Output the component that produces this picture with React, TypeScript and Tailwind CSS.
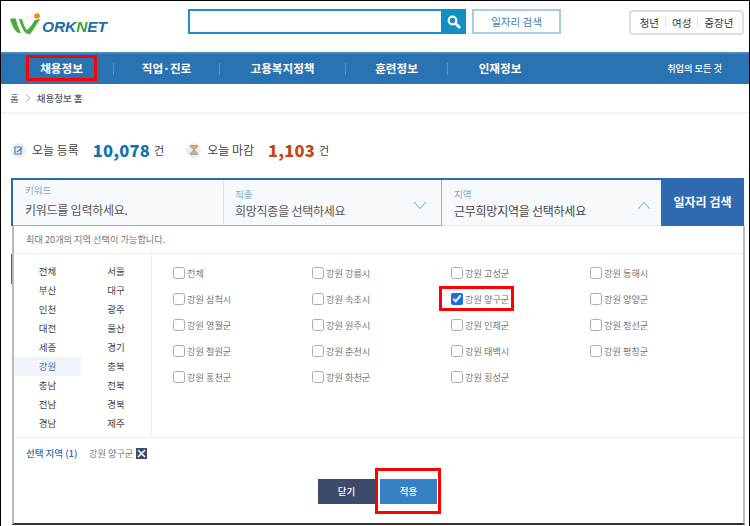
const font = { fontFamily: '"Noto Sans CJK KR", "Noto Sans", sans-serif' };

const navItems = ["채용정보", "직업·진로", "고용복지정책", "훈련정보", "인재정보"];
const navWidths = ["w-[113px] pl-[9px]", "w-[106px]", "w-[126px]", "w-[102px]", "w-[104px]"];

const sidos = [
  "전체", "서울", "부산", "대구", "인천", "광주", "대전", "울산", "세종",
  "경기", "강원", "충북", "충남", "전북", "전남", "경북", "경남", "제주",
];

const regions = [
  "전체", "강원 강릉시", "강원 고성군", "강원 동해시",
  "강원 삼척시", "강원 속초시", "강원 양구군", "강원 양양군",
  "강원 영월군", "강원 원주시", "강원 인제군", "강원 정선군",
  "강원 철원군", "강원 춘천시", "강원 태백시", "강원 평창군",
  "강원 홍천군", "강원 화천군", "강원 횡성군",
];

function Logo() {
  return (
    <div className="flex items-end h-[24px] ml-[9px]">
      <svg width="32" height="24" viewBox="0 0 32 24" className="shrink-0">
        <circle cx="27" cy="4" r="2.8" fill="#ee8a1d" />
        <path d="M0 7 C3 6 5 6 6 7 C7 12 9 17 11 21 C6 22 3 16 0 7Z" fill="#49ac3f" />
        <path d="M9 7 L12 7 C13 11 15 16 17 18 C20 16 23 11 25 8 L31 7 C27 10 24 18 20 22 C14 23 11 14 9 7Z" fill="#49ac3f" />
      </svg>
      <span className="text-[15.5px] leading-[19px] font-bold italic text-[#1d6da8] tracking-[-0.1px]" style={{ fontFamily: '"Liberation Sans", sans-serif' }}>
        ORK<span className="text-[#3fa535]">N</span>ET
      </span>
    </div>
  );
}

function Header() {
  return (
    <div className="flex items-start h-[51px] pt-[8px]">
      <div className="w-[187px] shrink-0 pt-[3px]">
        <Logo />
      </div>
      <div className="flex shrink-0 w-[278px] h-[25px] border-2 border-[#1b8fc7]">
        <div className="flex-1" />
        <div className="w-[25px] -my-[2px] -mr-[2px] h-[25px] bg-[#0f8fc4] flex items-center justify-center">
          <svg width="14" height="14" viewBox="0 0 14 14" fill="none" stroke="white" strokeWidth="2.2">
            <circle cx="5.5" cy="5.5" r="3.8" />
            <path d="M8.5 8.5 L13 13" strokeWidth="2.8" />
          </svg>
        </div>
      </div>
      <div className="ml-[6px] shrink-0 w-[89px] h-[25px] border-2 border-[#a5cbe6] flex items-center justify-center text-[10.5px] text-[#3b7fb0]">
        일자리 검색
      </div>
      <div className="ml-[68px] shrink-0 w-[115px] h-[25px] mt-[1px] border-2 border-[#dddddd] rounded-[4px] flex items-center justify-center text-[10.5px] text-[#333333]">
        <span>청년</span>
        <span className="w-px h-[9px] bg-[#dddddd] mx-[6px]" />
        <span>여성</span>
        <span className="w-px h-[9px] bg-[#dddddd] mx-[6px]" />
        <span>중장년</span>
      </div>
    </div>
  );
}

function Nav() {
  return (
    <div className="flex items-center h-[32px] bg-[#2a73b3] border-t-2 border-[#4a87bd] text-white">
      {navItems.map((item, i) => (
        <div key={item} className={`flex shrink-0 items-center justify-center h-[12px] text-[11.6px] font-bold whitespace-nowrap ${navWidths[i]} ${i < 4 ? "border-r border-[#5b94c6]" : ""}`}>
          {item}
        </div>
      ))}
      <div className="ml-auto pr-[27px] text-[9.2px] font-medium whitespace-nowrap">취업의 모든 것</div>
    </div>
  );
}

function Stat({ label, value, color, icon }: { label: string; value: string; color: string; icon: React.ReactNode }) {
  return (
    <div className="flex items-center">
      <span className="w-[15px] h-[15px] rounded-full bg-[#e9eef3] flex items-center justify-center">{icon}</span>
      <span className="ml-[6px] text-[12px] text-[#444444]">{label}</span>
      <span className={`ml-[14px] text-[16.5px] font-extrabold leading-none tracking-[0.2px] ${color}`}>{value}</span>
      <span className="ml-[4px] text-[11px] text-[#444444]">건</span>
    </div>
  );
}

function Chevron({ up }: { up?: boolean }) {
  return (
    <svg width="14" height="9" viewBox="0 0 14 9" fill="none" stroke="#8fb0cf" strokeWidth="1.1" className="shrink-0">
      <path d={up ? "M1 8 L7 1.5 L13 8" : "M1 1 L7 7.5 L13 1"} />
    </svg>
  );
}

function SearchBar() {
  return (
    <div className="flex h-[48px] ml-[10px] w-[733px] border-t-2 border-l-2 border-[#2f69b0] bg-[#f7fafd]">
      <div className="w-[211px] shrink-0 border-r border-b border-[#d8e2ea] border-b-[#aaaaaa] pl-[12px] pt-[3px]">
        <div className="text-[9.5px] leading-[14px] text-[#7aa6cc]">키워드</div>
        <div className="mt-[3px] text-[12px] tracking-[-0.25px] leading-[20px] text-[#555555]">키워드를 입력하세요.</div>
      </div>
      <div className="w-[218px] shrink-0 border-r border-b border-[#aaaaaa] pl-[11px] pr-[14px] pt-[5px] flex items-end justify-between pb-[8px]">
        <div>
          <div className="text-[9.5px] leading-[14px] text-[#7aa6cc]">직종</div>
          <div className="text-[12px] tracking-[-0.25px] leading-[20px] text-[#555555] -mb-[4px]">희망직종을 선택하세요</div>
        </div>
        <div className="mb-[7px]"><Chevron /></div>
      </div>
      <div className="w-[219px] shrink-0 border-b border-[#e3e9ef] pl-[12px] pr-[10px] pt-[5px] flex items-end justify-between pb-[8px]">
        <div>
          <div className="text-[9.5px] leading-[14px] text-[#7aa6cc]">지역</div>
          <div className="text-[12px] tracking-[-0.25px] leading-[20px] text-[#444444] -mb-[4px]">근무희망지역을 선택하세요</div>
        </div>
        <div className="mb-[7px]"><Chevron up /></div>
      </div>
      <div className="w-[83px] shrink-0 -mt-[2px] bg-[#2f69b0] text-white text-[12px] font-bold flex items-center justify-center">
        일자리 검색
      </div>
    </div>
  );
}

function RegionPanel() {
  return (
    <div className="relative ml-[11px] w-[733px] h-[299px] border-l-2 border-r-2 border-b-2 border-[#bbbbbb] border-b-[#333333] bg-white">
      <div className="absolute -left-[3px] top-[28px] w-px h-[30px] bg-[#2f69b0]" />
      <div className="h-[28px] border-b border-[#ededed] pl-[12px] flex items-center text-[9.2px] text-[#777777]">
        최대 20개의 지역 선택이 가능합니다.
      </div>
      <div className="flex h-[184px] border-b border-[#ededed]">
        <div className="w-[138px] shrink-0 border-r border-[#ededed] grid grid-cols-[67px_70px] content-start pt-[8px]">
          {sidos.map((s) => (
            <div key={s} className={`h-[19px] flex items-center justify-center text-[9.5px] ${s === "강원" ? "bg-[#f1f5f9] text-[#2f6fae]" : "text-[#444444]"}`}>
              {s}
            </div>
          ))}
        </div>
        <div className="flex-1 grid grid-cols-[repeat(4,139px)] content-start pl-[21px] pt-[11px]">
          {regions.map((r) => (
            <label key={r} className="h-[26px] flex items-start gap-[2px] text-[9.2px] leading-[17px] text-[#777777]">
              <input type="checkbox" readOnly checked={r === "강원 양구군"} className="w-[12px] h-[12px] m-0 mt-[2px] accent-[#1a6fe0] opacity-60 checked:opacity-100" />
              <span>{r}</span>
            </label>
          ))}
        </div>
      </div>
      <div className="flex items-center h-[31px] pl-[12px] text-[9.5px]">
        <span className="font-medium text-[#2a6ea8] w-[63px]">선택 지역 (1)</span>
        <span className="text-[9.2px] text-[#777777]">강원 양구군</span>
        <span className="ml-[3px] w-[11px] h-[11px] bg-[#3d4a6b] flex items-center justify-center">
          <svg width="9" height="9" viewBox="0 0 9 9" stroke="white" strokeWidth="1.5"><path d="M1 1 L8 8 M8 1 L1 8" /></svg>
        </span>
      </div>
      <div className="flex justify-center gap-[5px] pt-[10px] pr-[2px]">
        <div className="w-[57px] h-[25px] bg-[#3d4a6b] text-white text-[9.5px] font-medium flex items-center justify-center">닫기</div>
        <div className="w-[57px] h-[25px] bg-[#3680c4] text-white text-[9.5px] font-medium flex items-center justify-center">적용</div>
      </div>
    </div>
  );
}

export default function App() {
  return (
    <div className="relative w-[750px] h-[526px] bg-white overflow-hidden border-t border-l border-r border-black" style={font}>
      <Header />
      <Nav />
      <div className="h-[30px] border-b-2 border-[#f3f3f3] pl-[9px] flex items-center text-[9.5px] text-[#555555]">
        <span>홈</span>
        <svg width="6" height="8" viewBox="0 0 6 8" fill="none" stroke="#aaaaaa" className="mx-[6px]"><path d="M1 0.5 L5 4 L1 7.5" /></svg>
        <span className="font-medium">채용정보 홈</span>
      </div>
      <div className="flex items-center gap-[22px] h-[64px] pl-[10px] pt-[8px]">
        <Stat
          label="오늘 등록"
          value="10,078"
          color="text-[#1273ac]"
          icon={<svg width="9" height="9" viewBox="0 0 9 9" fill="none" stroke="#4b7fae" strokeWidth="1.2"><path d="M1 1 H7 V8 H1Z" /><path d="M3 6 L8 2" /></svg>}
        />
        <Stat
          label="오늘 마감"
          value="1,103"
          color="text-[#c4471a]"
          icon={<svg width="8" height="10" viewBox="0 0 8 10"><path d="M0.5 0.5 H7.5 V2 L4 5 L7.5 8 V9.5 H0.5 V8 L4 5 L0.5 2Z" fill="#e8a869" stroke="#8d9aa8" strokeWidth="0.8" /></svg>}
        />
      </div>
      <SearchBar />
      <RegionPanel />

      {/* red highlight boxes drawn over the capture */}
      <div className="absolute left-[25px] top-[54px] w-[71px] h-[26px] border-[3px] border-[#ff0000]" />
      <div className="absolute left-[438px] top-[285px] w-[75px] h-[25px] border-[3px] border-[#ff0000]" />
      <div className="absolute left-[374px] top-[467px] w-[66px] h-[46px] border-[3px] border-[#ff0000]" />
    </div>
  );
}
